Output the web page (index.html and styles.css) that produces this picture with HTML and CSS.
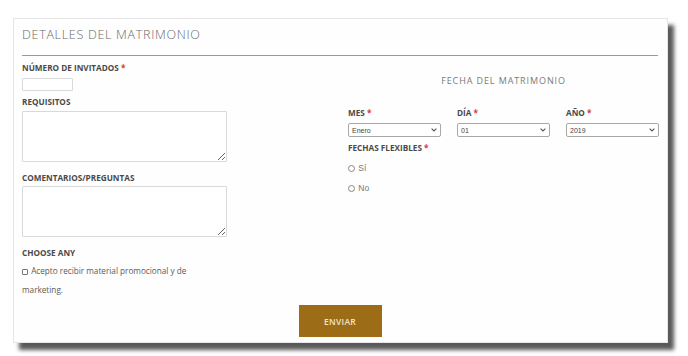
FILE: index.html
```html
<!DOCTYPE html>
<html lang="es">

<head>
    <meta charset="UTF-8">
    <title>Detalles del matrimonio</title>
    <link rel="stylesheet" href="styles.css">
</head>

<body>
    <div class="card">
        <h2 class="heading">DETALLES DEL MATRIMONIO</h2>

        <form class="form">
            <div class="col-left">
                <label class="label first">NÚMERO DE INVITADOS <span class="req">*</span></label>
                <input type="text" class="small-input">

                <label class="label">REQUISITOS</label>
                <textarea class="area"></textarea>

                <label class="label gap-big">COMENTARIOS/PREGUNTAS</label>
                <textarea class="area"></textarea>

                <label class="label gap-big">CHOOSE ANY</label>
                <div class="check-line">
                    <input type="checkbox" class="check"> Acepto recibir material promocional y de marketing.
                </div>
            </div>

            <div class="col-right">
                <div class="subheading">FECHA DEL MATRIMONIO</div>

                <div class="date-row">
                    <div class="date-field">
                        <label class="label">MES <span class="req">*</span></label>
                        <div class="select-wrap">
                            <select class="select">
                                <option>Enero</option>
                            </select>
                            <svg class="chevron" width="6" height="4" viewBox="0 0 6 4">
                                <path d="M0.6 0.6 L3 3 L5.4 0.6" fill="none" stroke="#555" stroke-width="1.1" />
                            </svg>
                        </div>
                    </div>
                    <div class="date-field">
                        <label class="label">DÍA <span class="req">*</span></label>
                        <div class="select-wrap">
                            <select class="select">
                                <option>01</option>
                            </select>
                            <svg class="chevron" width="6" height="4" viewBox="0 0 6 4">
                                <path d="M0.6 0.6 L3 3 L5.4 0.6" fill="none" stroke="#555" stroke-width="1.1" />
                            </svg>
                        </div>
                    </div>
                    <div class="date-field">
                        <label class="label">AÑO <span class="req">*</span></label>
                        <div class="select-wrap">
                            <select class="select">
                                <option>2019</option>
                            </select>
                            <svg class="chevron" width="6" height="4" viewBox="0 0 6 4">
                                <path d="M0.6 0.6 L3 3 L5.4 0.6" fill="none" stroke="#555" stroke-width="1.1" />
                            </svg>
                        </div>
                    </div>
                </div>

                <label class="label flex-label">FECHAS FLEXIBLES <span class="req">*</span></label>
                <div class="radio-line first-radio"><input type="radio" name="flex" class="radio"> Sí</div>
                <div class="radio-line"><input type="radio" name="flex" class="radio"> No</div>
            </div>
        </form>

        <div class="actions">
            <button type="button" class="send">ENVIAR</button>
        </div>
    </div>
</body>

</html>
```

FILE: styles.css
```css
html,
body {
    background-color: #ffffff;
}

body {
    margin: 0;
    padding: 18px 0 13px 13px;
    font-family: "Open Sans", "Liberation Sans", sans-serif;
}

.card {
    box-sizing: border-box;
    width: 655px;
    height: 325px;
    padding: 0 9px 0 8px;
    background-color: #fefefe;
    border: 1px solid #e6e6e6;
    box-shadow: 6px 7px 4px rgba(0, 0, 0, 0.65);
}

.heading {
    margin: 0;
    padding: 7px 0 11px 0;
    line-height: 18px;
    font-size: 12.5px;
    font-weight: 300;
    letter-spacing: 0.7px;
    color: #6a6a6a;
    border-bottom: 1px solid #9a9a9a;
}

.form {
    display: grid;
    grid-template-columns: 309px 311px;
    column-gap: 17px;
}

.col-left,
.col-right {
    display: flex;
    flex-direction: column;
    align-items: flex-start;
}

.label {
    display: block;
    margin-top: 6px;
    line-height: 10px;
    font-size: 8.2px;
    font-weight: 700;
    color: #4a4a4a;
}

.label.first {
    margin-top: 7px;
}

.label.gap-big {
    margin-top: 11px;
}

.req {
    color: #d9393b;
}

.small-input {
    box-sizing: border-box;
    margin: 5px 0 0 0;
    width: 51px;
    height: 13px;
    border: 1px solid #d9d9d9;
    border-radius: 1px;
    padding: 0;
}

.area {
    box-sizing: border-box;
    margin: 4px 0 0 0;
    width: 205px;
    height: 51px;
    border: 1px solid #d9d9d9;
    border-radius: 1px;
    padding: 0;
}

.gap-big + .area {
    margin-top: 3px;
}

.check-line {
    margin-top: 3px;
    width: 185px;
    line-height: 19px;
    font-size: 8.2px;
    color: #5a5a5a;
}

.check {
    appearance: none;
    box-sizing: border-box;
    width: 6px;
    height: 6px;
    margin: 0 1px 0 0;
    border: 1px solid #777;
    border-radius: 1px;
    vertical-align: -0.5px;
}

.subheading {
    align-self: stretch;
    margin-top: 18px;
    line-height: 14px;
    text-align: center;
    font-size: 9px;
    letter-spacing: 0.9px;
    color: #7a7a7a;
}

.date-row {
    display: flex;
    gap: 16px;
    margin-top: 14px;
}

.date-field {
    width: 93px;
}

.date-field .label {
    margin-top: 6px;
}

.select-wrap {
    position: relative;
    margin-top: 5px;
}

.select {
    appearance: none;
    box-sizing: border-box;
    display: block;
    width: 93px;
    height: 14px;
    margin: 0;
    padding: 0 0 0 3px;
    border: 1px solid #a8a8a8;
    border-radius: 2px;
    background-color: #ffffff;
    font-family: "Liberation Sans", Arial, sans-serif;
    font-size: 7px;
    color: #444;
}

.chevron {
    position: absolute;
    right: 4px;
    top: 5px;
}

.flex-label {
    margin-top: 6px;
}

.radio-line {
    line-height: 20px;
    font-family: "Liberation Sans", Arial, sans-serif;
    font-size: 8.5px;
    color: #777;
}

.first-radio {
    margin-top: 5px;
}

.radio {
    appearance: none;
    box-sizing: border-box;
    width: 7px;
    height: 7px;
    margin: 0 1px 0 0;
    border: 1px solid #888;
    border-radius: 50%;
    vertical-align: -0.5px;
}

.actions {
    display: flex;
    justify-content: center;
    margin-top: 6px;
}

.send {
    width: 83px;
    height: 32px;
    border: none;
    background-color: #9d6c16;
    color: #f3e4c4;
    font-family: "Open Sans", "Liberation Sans", sans-serif;
    font-size: 8.5px;
    font-weight: 600;
    letter-spacing: 0.3px;
}
```
